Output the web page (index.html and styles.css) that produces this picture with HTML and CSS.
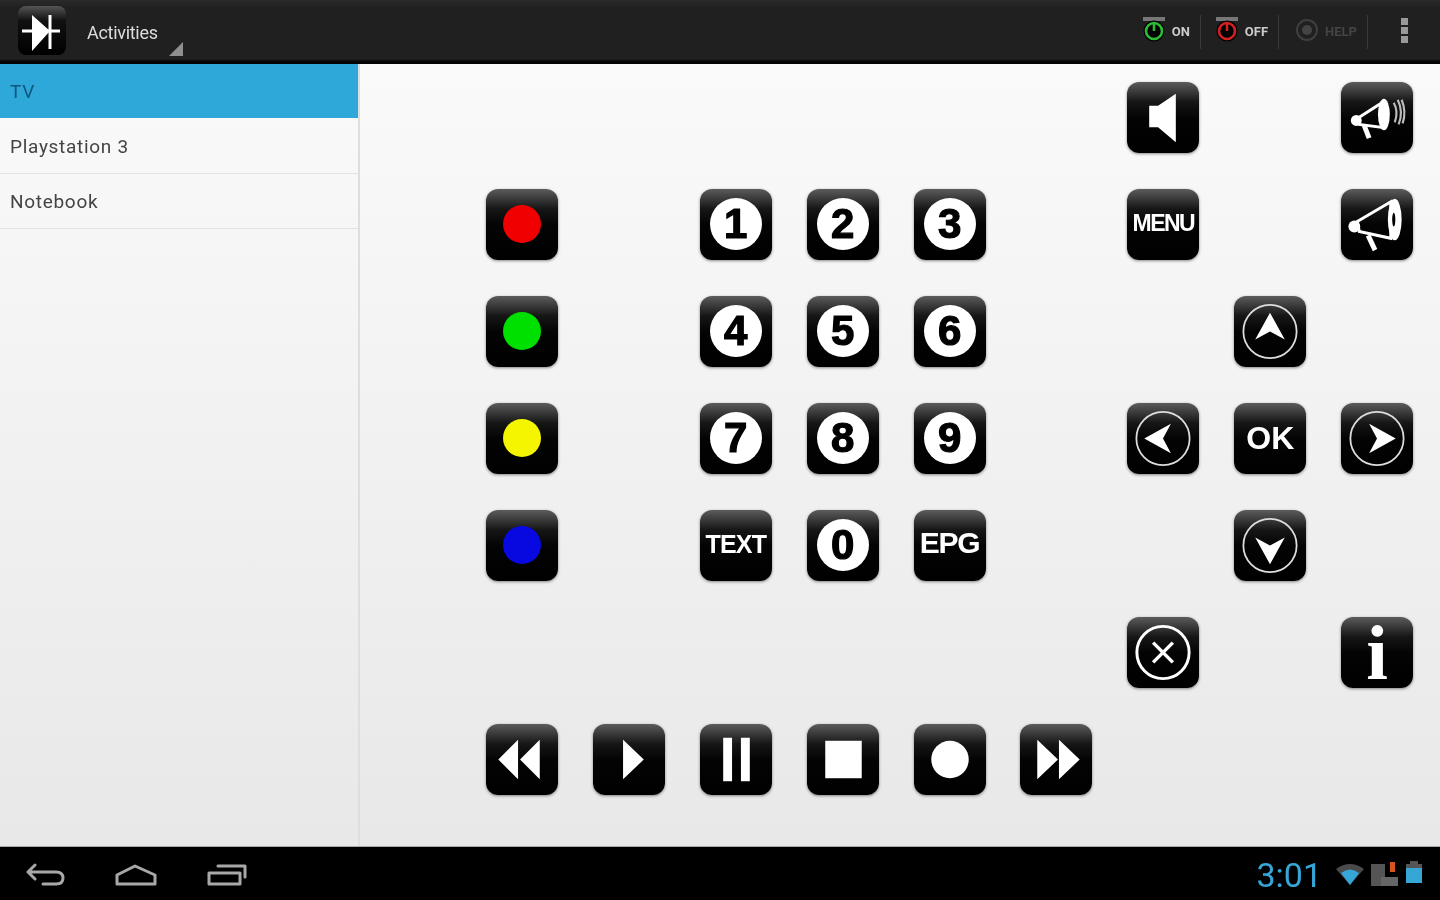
FILE: index.html
```html
<!DOCTYPE html>
<html lang="en">
<head>
    <meta charset="UTF-8">
    <meta name="viewport" content="width=device-width, initial-scale=1.0">
    <title>Activities</title>
    <link rel="stylesheet" href="styles.css">
</head>
<body>
    <header class="action-bar">
        <div class="app-icon">
            <svg viewBox="0 0 48 48" width="48" height="48">
                <path d="M4 25H42" class="line-white"></path>
                <path d="M14 9L32 25L14 45Z" fill="#fff"></path>
                <path d="M32 9V43" class="line-white"></path>
            </svg>
        </div>
        <div class="spinner">Activities</div>
        <div class="actions">
            <div class="action">
                <svg viewBox="0 0 24 26" width="24" height="26">
                    <rect x="1" y="0" width="22" height="4" fill="#777"></rect>
                    <circle cx="12" cy="14" r="10.5" fill="#000"></circle>
                    <circle cx="12" cy="14" r="8" class="ring" stroke="#2dbb36"></circle>
                    <path d="M12 6V14" stroke="#2dbb36" stroke-width="2.6"></path>
                </svg>
                <span>ON</span>
            </div>
            <div class="action">
                <svg viewBox="0 0 24 26" width="24" height="26">
                    <rect x="1" y="0" width="22" height="4" fill="#777"></rect>
                    <circle cx="12" cy="14" r="10.5" fill="#000"></circle>
                    <circle cx="12" cy="14" r="8" class="ring" stroke="#d42020"></circle>
                    <path d="M12 6V14" stroke="#d42020" stroke-width="2.6"></path>
                </svg>
                <span>OFF</span>
            </div>
            <div class="action disabled">
                <svg viewBox="0 0 24 26" width="24" height="26">
                    <circle cx="12" cy="13" r="10" fill="none" stroke="#3f3f3f" stroke-width="2"></circle>
                    <circle cx="12" cy="13" r="5" fill="#444"></circle>
                </svg>
                <span>HELP</span>
            </div>
            <div class="overflow">
                <i></i><i></i><i></i>
            </div>
        </div>
    </header>

    <main class="main">
        <ul class="devices">
            <li class="selected">TV</li>
            <li>Playstation 3</li>
            <li>Notebook</li>
        </ul>

        <section class="remote">
            <!-- row 1 -->
            <button class="btn c7 r1">
                <svg viewBox="0 0 72 72"><path d="M22 24H31L49 12V61L31 46H22Z" fill="#fff"></path></svg>
            </button>
            <button class="btn c9 r1">
                <svg viewBox="0 0 72 72">
                    <path d="M16 37L41 21V46L18 43Z" class="horn"></path>
                    <ellipse cx="43" cy="33" rx="6" ry="16" fill="#fff"></ellipse>
                    <circle cx="15" cy="39" r="5.5" fill="#fff"></circle>
                    <path d="M23 44L28 57" stroke="#fff" stroke-width="5"></path>
                    <path d="M53 21Q58 30 54 41M57 18Q63 30 58 43M61 18Q66 30 62 42" class="wave"></path>
                </svg>
            </button>

            <!-- row 2 -->
            <button class="btn c1 r2"><i class="dot red"></i></button>
            <button class="btn c3 r2"><span class="num">1</span></button>
            <button class="btn c4 r2"><span class="num">2</span></button>
            <button class="btn c5 r2"><span class="num">3</span></button>
            <button class="btn c7 r2"><span class="label menu">MENU</span></button>
            <button class="btn c9 r2">
                <svg viewBox="0 0 72 72">
                    <path d="M16 33L50 13V50L18 43Z" class="horn"></path>
                    <ellipse cx="54" cy="31" rx="7" ry="21" fill="#fff"></ellipse>
                    <ellipse cx="53" cy="31" rx="1.6" ry="7" fill="#000"></ellipse>
                    <circle cx="13" cy="38" r="6" fill="#fff"></circle>
                    <path d="M27 47L34 62" stroke="#fff" stroke-width="5"></path>
                </svg>
            </button>

            <!-- row 3 -->
            <button class="btn c1 r3"><i class="dot green"></i></button>
            <button class="btn c3 r3"><span class="num">4</span></button>
            <button class="btn c4 r3"><span class="num">5</span></button>
            <button class="btn c5 r3"><span class="num">6</span></button>
            <button class="btn c8 r3">
                <svg viewBox="0 0 72 72">
                    <circle cx="36" cy="36" r="27" class="circle"></circle>
                    <path d="M36 17L51 44L36 36L21 44Z" fill="#fff"></path>
                </svg>
            </button>

            <!-- row 4 -->
            <button class="btn c1 r4"><i class="dot yellow"></i></button>
            <button class="btn c3 r4"><span class="num">7</span></button>
            <button class="btn c4 r4"><span class="num">8</span></button>
            <button class="btn c5 r4"><span class="num">9</span></button>
            <button class="btn c7 r4">
                <svg viewBox="0 0 72 72">
                    <circle cx="36" cy="36" r="27" class="circle"></circle>
                    <path d="M17 36L44 21L36 36L44 51Z" fill="#fff"></path>
                </svg>
            </button>
            <button class="btn c8 r4"><span class="label ok">OK</span></button>
            <button class="btn c9 r4">
                <svg viewBox="0 0 72 72">
                    <circle cx="36" cy="36" r="27" class="circle"></circle>
                    <path d="M55 36L28 21L36 36L28 51Z" fill="#fff"></path>
                </svg>
            </button>

            <!-- row 5 -->
            <button class="btn c1 r5"><i class="dot blue"></i></button>
            <button class="btn c3 r5"><span class="label text">TEXT</span></button>
            <button class="btn c4 r5"><span class="num">0</span></button>
            <button class="btn c5 r5"><span class="label epg">EPG</span></button>
            <button class="btn c8 r5">
                <svg viewBox="0 0 72 72">
                    <circle cx="36" cy="36" r="27" class="circle"></circle>
                    <path d="M36 55L21 28L36 36L51 28Z" fill="#fff"></path>
                </svg>
            </button>

            <!-- row 6 -->
            <button class="btn c7 r6">
                <svg viewBox="0 0 72 72">
                    <circle cx="36" cy="36" r="26.5" fill="none" stroke="#fff" stroke-width="3"></circle>
                    <path d="M26 26L46 46M46 26L26 46" stroke="#fff" stroke-width="3.5"></path>
                </svg>
            </button>
            <button class="btn c9 r6"><span class="label info">i</span></button>

            <!-- row 7 -->
            <button class="btn c1 r7">
                <svg viewBox="0 0 72 72"><path d="M12 36L32 16V56ZM34 36L54 16V56Z" fill="#fff"></path></svg>
            </button>
            <button class="btn c2 r7">
                <svg viewBox="0 0 72 72"><path d="M30 16L51 36L30 56Z" fill="#fff"></path></svg>
            </button>
            <button class="btn c3 r7">
                <svg viewBox="0 0 72 72"><path d="M23 14H32V58H23ZM41 14H50V58H41Z" fill="#fff"></path></svg>
            </button>
            <button class="btn c4 r7">
                <svg viewBox="0 0 72 72"><rect x="18" y="17" width="37" height="38" fill="#fff"></rect></svg>
            </button>
            <button class="btn c5 r7">
                <svg viewBox="0 0 72 72"><circle cx="36" cy="36" r="19" fill="#fff"></circle></svg>
            </button>
            <button class="btn c6 r7">
                <svg viewBox="0 0 72 72"><path d="M17 16L38 36L17 56ZM39 16L60 36L39 56Z" fill="#fff"></path></svg>
            </button>
        </section>
    </main>

    <footer class="nav-bar">
        <div class="nav-buttons">
            <svg viewBox="0 0 40 24" width="40" height="24" class="nav-icon">
                <path d="M9 3L2 10L9 17M2 10H30Q37 10 37 16T30 22H17"></path>
            </svg>
            <svg viewBox="0 0 44 24" width="44" height="24" class="nav-icon">
                <path d="M3 13L21 4L41 13V22H3Z"></path>
            </svg>
            <svg viewBox="0 0 42 24" width="42" height="24" class="nav-icon">
                <path d="M3 11H34V22H3ZM12 4H39V15"></path>
            </svg>
        </div>
        <div class="status">
            <span class="clock">3:01</span>
            <svg viewBox="0 0 28 22" width="28" height="22">
                <path d="M0 6Q14 -4 28 6L14 22Z" fill="#4a4a4a"></path>
                <path d="M5 10Q14 3 23 10L14 22Z" fill="#35a6d6"></path>
            </svg>
            <svg viewBox="0 0 28 24" width="28" height="24">
                <path d="M0 2H14V24H0Z" fill="#555"></path>
                <rect x="10" y="15" width="17" height="9" fill="#666"></rect>
                <rect x="19" y="0" width="5" height="10" fill="#d9531e"></rect>
            </svg>
            <svg viewBox="0 0 16 22" width="16" height="22" class="battery">
                <rect x="4" y="0" width="8" height="3" fill="#555"></rect>
                <rect x="0" y="3" width="16" height="4" fill="#555"></rect>
                <rect x="0" y="7" width="16" height="15" fill="#35a6d6"></rect>
            </svg>
        </div>
    </footer>
</body>
</html>
```

FILE: styles.css
```css
* {
    box-sizing: border-box;
}

body {
    margin: 0;
    height: 100vh;
    display: flex;
    flex-direction: column;
    overflow: hidden;
    font-family: "Roboto", "Liberation Sans", sans-serif;
    background-color: #000;
}

/* Top action bar */
.action-bar {
    height: 64px;
    flex-shrink: 0;
    display: flex;
    align-items: center;
    padding: 0 18px 4px 18px;
    background: linear-gradient(#2a2a2a, #202020 12%, #202020 92%, #050505 96%);
}

.app-icon {
    width: 48px;
    height: 49px;
    border-radius: 8px;
    background: linear-gradient(#555, #111 30%, #000);
    filter: blur(0.4px);
}

.line-white {
    stroke: #fff;
    stroke-width: 3;
    fill: none;
}

.spinner {
    position: relative;
    width: 97px;
    height: 40px;
    margin-left: 21px;
    line-height: 45px;
    font-size: 18px;
    letter-spacing: -0.3px;
    color: #ddd;
    filter: blur(0.5px);
}

.spinner::after {
    content: "";
    position: absolute;
    right: 1px;
    bottom: -6px;
    border-style: solid;
    border-width: 0 0 14px 14px;
    border-color: transparent transparent #8f8f8f transparent;
}

.actions {
    margin-left: auto;
    margin-top: 3px;
    display: flex;
    align-items: center;
}

.action {
    height: 34px;
    display: flex;
    align-items: center;
    gap: 6px;
    padding: 0 10px 0 14px;
    border-right: 1px solid #383838;
    font-size: 13px;
    font-weight: 700;
    color: #ccc;
    filter: blur(0.5px);
}

.action svg {
    margin-top: -4px;
}

.action.disabled {
    color: #444;
    padding-left: 16px;
}

.ring {
    fill: none;
    stroke-width: 2.6;
}

.overflow {
    width: 36px;
    margin-top: -3px;
    margin-left: 18px;
    display: flex;
    flex-direction: column;
    align-items: center;
    gap: 2px;
    filter: blur(0.5px);
}

.overflow i {
    width: 7px;
    height: 7px;
    background-color: #999;
}

/* Main area */
.main {
    flex: 1;
    display: flex;
    background: linear-gradient(#fafafa, #e8e8e8);
}

.devices {
    width: 360px;
    flex-shrink: 0;
    margin: 0;
    padding: 0;
    list-style-type: none;
    border-right: 2px solid #dedede;
}

.devices li {
    height: 55px;
    padding-left: 10px;
    line-height: 56px;
    font-size: 19px;
    letter-spacing: 0.7px;
    color: #444;
    border-bottom: 1px solid #e3e3e3;
    filter: blur(0.4px);
}

.devices li.selected {
    height: 54px;
    margin-bottom: 1px;
    border-bottom: none;
    color: #0e5580;
    background-color: #2ea8d8;
}

.remote {
    display: grid;
    grid-template-columns: repeat(9, 72px);
    grid-template-rows: repeat(7, 72px);
    column-gap: 34.9px;
    row-gap: 35px;
    align-content: start;
    padding: 18px 0 0 126px;
}

/* Remote buttons */
.btn {
    width: 72px;
    height: 71px;
    padding: 0;
    border: none;
    border-radius: 12px;
    display: flex;
    align-items: center;
    justify-content: center;
    background: linear-gradient(#5c5c5c, #161616 28%, #040404 50%, #000);
    box-shadow: 0 1px 3px rgba(0, 0, 0, 0.45);
    filter: blur(0.4px);
}

.btn svg {
    width: 72px;
    height: 71px;
    display: block;
}

.c1 { grid-column: 1; }
.c2 { grid-column: 2; }
.c3 { grid-column: 3; }
.c4 { grid-column: 4; }
.c5 { grid-column: 5; }
.c6 { grid-column: 6; }
.c7 { grid-column: 7; }
.c8 { grid-column: 8; }
.c9 { grid-column: 9; }

.r1 { grid-row: 1; }
.r2 { grid-row: 2; }
.r3 { grid-row: 3; }
.r4 { grid-row: 4; }
.r5 { grid-row: 5; }
.r6 { grid-row: 6; }
.r7 { grid-row: 7; }

.dot {
    width: 38px;
    height: 38px;
    margin-top: -1px;
    border-radius: 50%;
}

.red { background-color: #f00000; }
.green { background-color: #00e000; }
.yellow { background-color: #f5f500; }
.blue { background-color: #0808e0; }

.num {
    width: 52px;
    height: 52px;
    margin-top: -1px;
    border-radius: 50%;
    background-color: #fff;
    color: #000;
    font-size: 42px;
    font-weight: 700;
    line-height: 52px;
    text-align: center;
    -webkit-text-stroke: 1.2px #000;
}

.label {
    color: #fff;
    font-weight: 700;
    white-space: nowrap;
}

.menu {
    font-size: 23px;
    letter-spacing: -1.5px;
    margin-top: -2px;
}

.text {
    font-size: 25px;
    letter-spacing: -0.8px;
    margin-top: -2px;
}

.epg {
    font-size: 30px;
    letter-spacing: -1.2px;
    margin-top: -5px;
}

.ok {
    font-size: 32px;
    margin-top: -1px;
}

.info {
    font-family: "Liberation Serif", serif;
    font-size: 78px;
    line-height: 72px;
}

.horn {
    fill: none;
    stroke: #fff;
    stroke-width: 3;
}

.wave {
    fill: none;
    stroke: #bbb;
    stroke-width: 2.2;
}

.circle {
    fill: none;
    stroke: #ddd;
    stroke-width: 1.8;
}

/* System bar */
.nav-bar {
    height: 54px;
    flex-shrink: 0;
    display: flex;
    align-items: center;
    justify-content: space-between;
    padding: 0 18px 0 26px;
    background-color: #000;
    border-top: 1px solid #a8a8a8;
}

.nav-buttons {
    display: flex;
    align-items: center;
    gap: 48px;
}

.nav-icon {
    filter: blur(0.5px);
}

.nav-icon path {
    fill: none;
    stroke: #a8a8a8;
    stroke-width: 3;
    stroke-linejoin: round;
    stroke-linecap: round;
}

.status {
    display: flex;
    align-items: center;
    gap: 7px;
    filter: blur(0.5px);
}

.clock {
    margin-top: 3px;
    margin-right: 7px;
    font-size: 34px;
    font-weight: 400;
    color: #35a6d6;
}

.battery {
    margin-top: -3px;
}
```
